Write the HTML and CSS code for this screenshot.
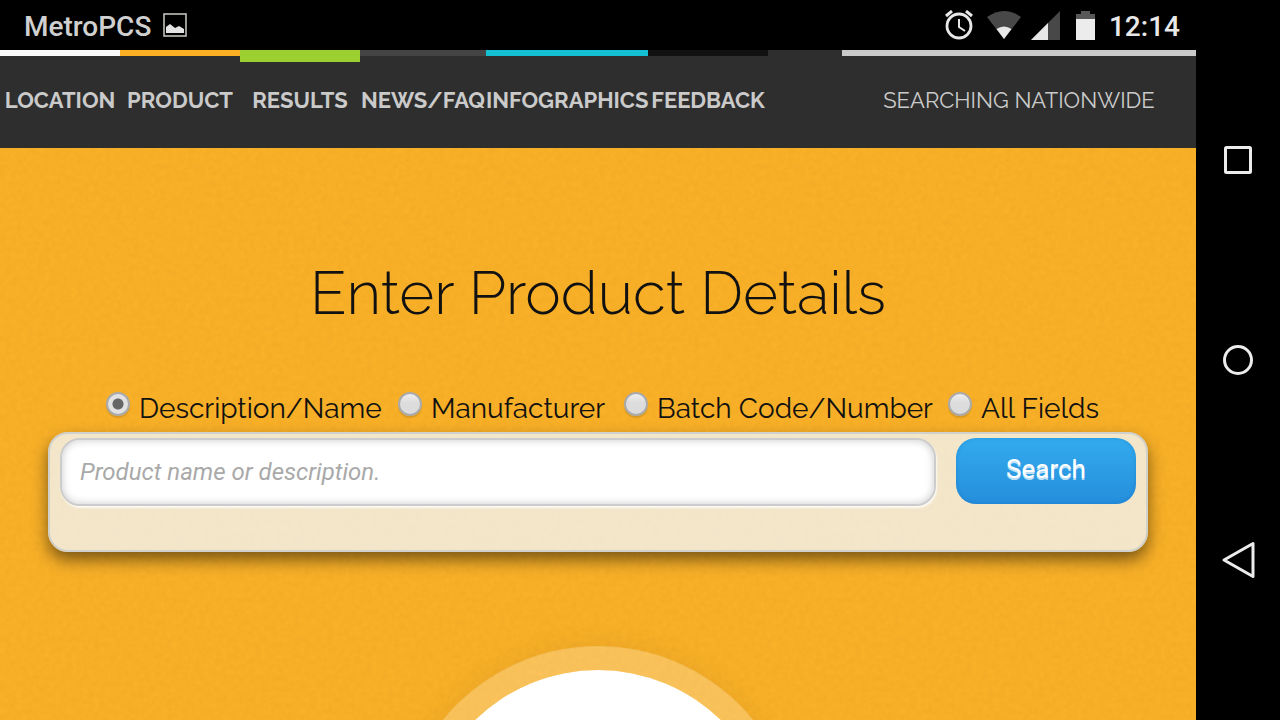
FILE: index.html
```html
<!DOCTYPE html>
<html lang="en">
<head>
<meta charset="utf-8">
<meta name="viewport" content="width=device-width, initial-scale=1">
<title>Enter Product Details</title>
<link rel="stylesheet" href="styles.css">
</head>
<body>
<header class="status">
  <div class="status-group">
    <span>MetroPCS</span>
    <svg width="24" height="24" viewBox="0 0 24 24"><rect x="1" y="1" width="22" height="22" fill="none" stroke="#c0c0bc" stroke-width="1.600"/><path d="M3 20V14L7 11l5 4 4-2 5 3v4z" fill="#e4e4e4"/></svg>
  </div>
  <div class="status-group status-right">
    <svg width="28" height="30" viewBox="0 0 28 30" fill="none" stroke="#e8e8e8"><circle cx="14" cy="16" r="12" stroke-width="2.8"/><path d="M14 9v8l6 4" stroke-width="2"/><path d="M1 6l6-5M27 6l-6-5" stroke-width="3"/></svg>
    <svg class="wifi" width="34" height="29" viewBox="0 0 34 29"><path d="M0 6Q17-6 34 6L17 28z" fill="#484848"/><path d="M9.500 18Q17 13 24.500 18L17 28z" fill="#e8e8e8"/></svg>
    <svg class="signal" width="29" height="29" viewBox="0 0 29 29"><path d="M29 0v29H0z" fill="#484848"/><path d="M17 12v17H0z" fill="#e8e8e8"/></svg>
    <svg class="battery" width="19" height="29" viewBox="0 0 19 29"><path d="M0 3h5V0h9v3h5v6H0z" fill="#585858"/><path d="M0 8h19v21H0z" fill="#ececec"/></svg>
    <span>12:14</span>
  </div>
</header>
<div class="page">
  <nav class="menu">
    <a class="white" href="#">LOCATION</a>
    <a class="orange" href="#">PRODUCT</a>
    <a class="green" href="#">RESULTS</a>
    <a class="gray" href="#">NEWS/FAQ</a>
    <a class="cyan" href="#">INFOGRAPHICS</a>
    <a class="dark" href="#">FEEDBACK</a>
    <span class="scope">SEARCHING NATIONWIDE</span>
  </nav>
  <main class="content">
    <h1>Enter Product Details</h1>
    <form class="search">
      <div class="options">
        <label><input type="radio" name="field" checked>Description/Name</label>
        <label><input type="radio" name="field">Manufacturer</label>
        <label><input type="radio" name="field">Batch Code/Number</label>
        <label><input type="radio" name="field">All Fields</label>
      </div>
      <div class="panel">
        <input class="query" type="text" aria-label="Product name or description" placeholder="Product name or description.">
        <button class="submit" type="submit">Search</button>
      </div>
    </form>
    <div class="disc"></div>
  </main>
</div>
<aside class="system">
  <button type="button" aria-label="Recent apps"><svg width="36" height="40" viewBox="0 0 36 40"><rect x="5.500" y="7.500" width="25" height="25" rx="1"/></svg></button>
  <button type="button" aria-label="Home"><svg width="36" height="40" viewBox="0 0 36 40"><circle cx="18" cy="20" r="13.500"/></svg></button>
  <button type="button" aria-label="Back"><svg width="36" height="40" viewBox="0 0 36 40"><path d="M33 3.500v33L4 20z"/></svg></button>
</aside>
</body>
</html>
```
FILE: styles.css
```css
* { box-sizing: border-box; }

body {
  margin: 0;
  height: 100vh;
  overflow: hidden;
  display: grid;
  grid-template-columns: minmax(0, 1fr) 84px;
  grid-template-rows: 50px minmax(0, 1fr);
  background: #000;
  font-family: Raleway, Lato, sans-serif;
}

.status {
  display: flex;
  justify-content: space-between;
  align-items: center;
  padding: 0 16px 0 24px;
  color: #d0d0d0;
  font: 500 28px/32px Roboto, sans-serif;
}

.status-group { display: flex; align-items: center; gap: 12px; }
.status-group span { padding-top: 4px; }
.status-right { color: #e8e8e8; }
.wifi { margin-left: 2px; }
.signal { margin-left: -2px; }
.battery { margin: 0 2px 0 4px; }

.page {
  grid-column: 1;
  display: flex;
  flex-direction: column;
  min-height: 0;
}

.menu {
  display: flex;
  flex: 0 0 98px;
  background: #2e2e2e;
  color: #cacaca;
  font-size: 22px;
  line-height: 24px;
}

.menu a {
  width: 120px;
  border-top: 6px solid;
  padding-top: 32px;
  color: #cacaca;
  font-weight: 700;
  text-align: center;
  text-decoration: none;
  white-space: nowrap;
}

.menu .white { border-color: #fafafa; }
.menu .orange { border-color: #fbb024; }
.menu .green { border-color: #9bd030; border-top-width: 12px; padding-top: 26px; }
.menu .gray { border-color: #444; width: 126px; }
.menu .cyan { border-color: #13c0d1; width: 162px; }
.menu .dark { border-color: #111; }

.scope {
  min-width: 354px;
  margin-left: auto;
  border-top: 6px solid #cacaca;
  padding-top: 32px;
  font-weight: 400;
  text-align: center;
}

.content {
  flex: 1;
  min-height: 0;
  overflow: hidden;
  padding: 108px 48px 0;
  background-color: #fab128;
  background-image: url("data:image/svg+xml,%3Csvg xmlns='http://www.w3.org/2000/svg' width='300' height='300'%3E%3Cfilter id='n' x='0' y='0' width='1' height='1' color-interpolation-filters='sRGB'%3E%3CfeTurbulence type='fractalNoise' baseFrequency='.18' numOctaves='3' stitchTiles='stitch'/%3E%3CfeColorMatrix values='0 0 0 0 .8 0 0 0 0 .55 0 0 0 0 .1 .24 0 0 0 -.05'/%3E%3C/filter%3E%3Crect width='300' height='300' filter='url(%23n)'/%3E%3C/svg%3E");
  color: #111;
}

h1 {
  margin: 0;
  font-size: 60px;
  font-weight: 300;
  line-height: 74px;
  text-align: center;
}

.options {
  display: grid;
  grid-template-columns: 292fr 226fr 324fr 152fr;
  margin: 58px 48px 0 58px;
  height: 44px;
  font-size: 28px;
  font-weight: 400;
  line-height: 42px;
}

.options label { display: flex; gap: 9px; white-space: nowrap; }

.options input {
  appearance: none;
  flex: none;
  width: 24px;
  height: 24px;
  margin: 4px 0 0;
  border: 2px solid #aaa;
  border-radius: 50%;
  background: linear-gradient(#eee, #dcdcdc 45%);
  box-shadow: 0 2px 1px rgba(0, 0, 0, .12);
}

.options input:checked {
  background: radial-gradient(circle, #666 5px, #e2e2e2 6px);
}

.panel {
  display: flex;
  gap: 20px;
  align-items: flex-start;
  min-height: 120px;
  padding: 4px 10px;
  border: 2px solid #d0d0cc;
  border-radius: 20px;
  background: rgba(242, 240, 234, .83);
  box-shadow: 0 8px 16px rgba(0, 0, 0, .5);
}

.query {
  flex: 1;
  min-width: 0;
  height: 68px;
  padding: 0 18px;
  border: 2px solid #ccc;
  border-radius: 20px;
  background: #fff;
  box-shadow: inset 0 0 8px rgba(0, 0, 0, .22), 1px 2px 2px rgba(255, 255, 255, .8);
  font: 24px Roboto, sans-serif;
}

.query::placeholder { color: #a9a9a9; font-style: italic; opacity: 1; }

.submit {
  width: 180px;
  height: 66px;
  padding: 0 0 4px;
  border: 0;
  border-radius: 20px;
  background: linear-gradient(#33abee, #258edc);
  box-shadow: inset 0 0 4px rgba(0, 80, 160, .25);
  color: #fff;
  font: 400 26px Roboto, sans-serif;
  text-shadow: 0 2px 0 rgba(255, 255, 255, .7);
}

.disc {
  width: 400px;
  height: 400px;
  margin: 94px auto 0;
  border: 24px solid rgba(255, 255, 255, .23);
  border-radius: 50%;
  background: #fff padding-box;
  box-shadow: 0 0 30px rgba(0, 0, 0, .06);
}

.system {
  grid-column: 2;
  grid-row: 1 / 3;
  display: flex;
  flex-direction: column;
  justify-content: center;
  gap: 160px;
}

.system button { padding: 0; border: 0; background: none; height: 40px; }
.system svg { display: block; margin: auto; fill: none; stroke: #ececec; stroke-width: 3; stroke-linejoin: round; }
```
